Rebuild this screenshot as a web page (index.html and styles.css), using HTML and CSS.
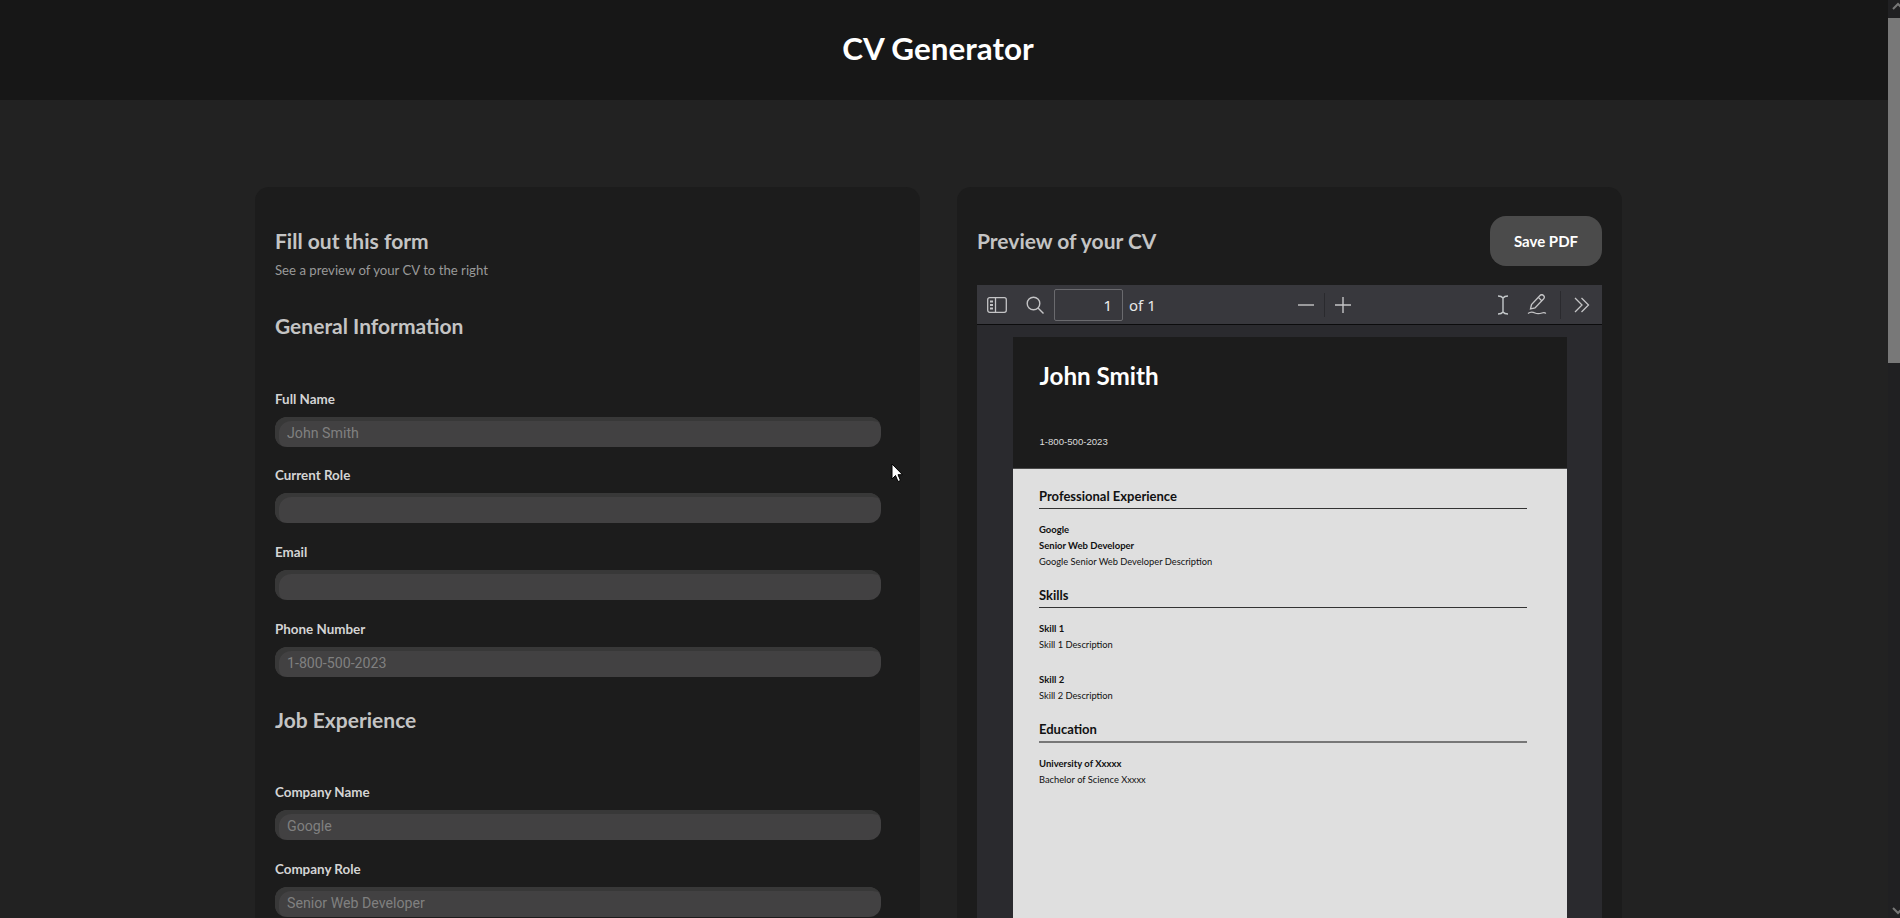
FILE: index.html

```html
<!DOCTYPE html>
<html lang="en">
<head>
  <meta charset="UTF-8" />
  <meta name="viewport" content="width=device-width, initial-scale=1" />
  <title>CV Generator</title>
  <link rel="stylesheet" href="styles.css">
</head>
<body>
  <div class="page">
    <header class="topbar">
      <h1>CV Generator</h1>
    </header>

    <main class="columns">
      <section class="card">
        <h2 class="form-title">Fill out this form</h2>
        <p class="form-sub">See a preview of your CV to the right</p>

        <h2 class="group-title">General Information</h2>
        <div class="field">
          <label for="fullName">Full Name</label>
          <input id="fullName" type="text" placeholder="John Smith" />
        </div>
        <div class="field">
          <label for="currentRole">Current Role</label>
          <input id="currentRole" type="text" />
        </div>
        <div class="field">
          <label for="email">Email</label>
          <input id="email" type="email" />
        </div>
        <div class="field">
          <label for="phone">Phone Number</label>
          <input id="phone" type="text" placeholder="1-800-500-2023" />
        </div>

        <h2 class="group-title">Job Experience</h2>
        <div class="field">
          <label for="company">Company Name</label>
          <input id="company" type="text" placeholder="Google" />
        </div>
        <div class="field">
          <label for="companyRole">Company Role</label>
          <input id="companyRole" type="text" placeholder="Senior Web Developer" />
        </div>
      </section>

      <section class="card">
        <div class="preview-head">
          <h2 class="form-title">Preview of your CV</h2>
          <button class="save-btn" type="button">Save PDF</button>
        </div>

        <div class="viewer">
          <div class="toolbar">
            <div class="tool-left">
              <svg class="icon" width="20" height="16" viewBox="0 0 20 16" fill="none" stroke="#c4c4c6" stroke-width="1.3">
                <rect x="0.7" y="0.7" width="18.6" height="14.6" rx="2"/>
                <path d="M8.5 1v14"/>
                <path d="M3 4.5h3M3 8h3M3 11.500h3" stroke-width="2"/>
              </svg>
              <svg class="icon search-icon" width="18" height="18" viewBox="0 0 18 18" fill="none" stroke="#c4c4c6" stroke-width="1.4">
                <circle cx="7.500" cy="7.500" r="6.300"/>
                <path d="M12 12l5.500 5.500"/>
              </svg>
              <input class="page-num" type="text" value="1" />
              <span class="page-total">of 1</span>
            </div>
            <div class="tool-zoom">
              <svg class="icon" width="16" height="16" viewBox="0 0 16 16" stroke="#c4c4c6" stroke-width="1.4"><path d="M0 8h16"/></svg>
              <span class="tool-sep"></span>
              <svg class="icon" width="16" height="16" viewBox="0 0 16 16" stroke="#c4c4c6" stroke-width="1.4"><path d="M0 8h16M8 0v16"/></svg>
            </div>
            <div class="tool-right">
              <svg class="icon" width="12" height="20" viewBox="0 0 12 20" fill="none" stroke="#c4c8ca" stroke-width="1.4">
                <path d="M1 1c2.500 0 4 .5 5 2 1-1.500 2.500-2 5-2M6 3v14M1 19c2.500 0 4-.5 5-2 1 1.500 2.500 2 5 2"/>
              </svg>
              <svg class="icon pen-icon" width="20" height="21" viewBox="0 0 20 21" fill="none" stroke="#c4c4c6" stroke-width="1.300">
                <path d="M3.500 15l1-4.500L13 1.500c1-1 2.500-1 3.500 0s1 2.500 0 3.500L8 14z"/>
                <path d="M11.500 3.500l3.500 3.500"/>
                <path d="M1 19.500c3-2.500 5-1.500 7-.5s4 1 7 0 3 .5 4 0"/>
              </svg>
              <span class="tool-sep tall"></span>
              <svg class="icon" width="16" height="16" viewBox="0 0 16 16" fill="none" stroke="#c4c4c6" stroke-width="1.300">
                <path d="M1 1l7 7-7 7M7.500 1l7 7-7 7"/>
              </svg>
            </div>
          </div>

          <div class="sheet">
            <div class="cv-head">
              <div class="cv-name">John Smith</div>
              <div class="cv-phone">1-800-500-2023</div>
            </div>
            <div class="cv-body">
              <h3 class="cv-title">Professional Experience</h3>
              <div class="cv-rows">
                <p class="strong">Google</p>
                <p class="strong">Senior Web Developer</p>
                <p>Google Senior Web Developer Description</p>
              </div>

              <h3 class="cv-title">Skills</h3>
              <div class="cv-rows">
                <p class="strong">Skill 1</p>
                <p>Skill 1 Description</p>
              </div>
              <div class="cv-rows second">
                <p class="strong">Skill 2</p>
                <p>Skill 2 Description</p>
              </div>

              <h3 class="cv-title thick">Education</h3>
              <div class="cv-rows">
                <p class="strong">University of Xxxxx</p>
                <p>Bachelor of Science Xxxxx</p>
              </div>
            </div>
          </div>
        </div>
      </section>
    </main>

    <svg class="cursor" width="12" height="20" viewBox="0 0 12 20">
      <path d="M1 1v15l3.500-3.500 2.500 6 2.500-1-2.500-5.800H11.500z" fill="#fff" stroke="#000" stroke-width="1"/>
    </svg>
  </div>

  <div class="scrollbar">
    <div class="scroll-btn"><svg width="12" height="18" viewBox="0 0 12 18" fill="none" stroke="#777" stroke-width="2"><path d="M5 9l5-5 5 5"/></svg></div>
    <div class="scroll-thumb"></div>
    <div class="scroll-btn bottom"><svg width="12" height="18" viewBox="0 0 12 18" fill="none" stroke="#777" stroke-width="2"><path d="M5 8l5 5 5-5"/></svg></div>
  </div>
</body>
</html>
```

FILE: styles.css

```css
html, body {
  height: 100%;
  overflow: hidden;
}
body {
  display: flex;
  margin: 0;
  background: #222;
  font-family: Lato, sans-serif;
}
.page {
  flex: 1;
  position: relative;
  height: 918px;
  overflow: hidden;
}
.topbar {
  height: 100px;
  display: flex;
  align-items: center;
  justify-content: center;
  padding: 0 12px 4px 0;
  box-sizing: border-box;
  background: #171717;
}
.topbar h1 {
  margin: 0;
  font-size: 31.4px;
  font-weight: 700;
  color: #fff;
}
.columns {
  display: grid;
  grid-template-columns: 665px 665px;
  gap: 37px;
  padding: 87px 0 0 255px;
}
.card {
  padding: 20px 20px 40px;
  background: #1c1c1c;
  border-radius: 14px;
}
.form-title {
  margin: 22px 0 0;
  font-size: 21px;
  line-height: 24px;
  font-weight: 700;
  color: #c4c4c4;
}
.form-sub {
  margin: 9px 0 34px;
  font-size: 13.200px;
  line-height: 17px;
  color: #999;
}
.group-title {
  margin: 30px 0 49.500px;
  font-size: 21px;
  line-height: 26px;
  font-weight: 700;
  color: #c4c4c4;
}
.field {
  margin-bottom: 18.800px;
  padding-right: 19px;
}
.field label {
  display: block;
  margin-bottom: 7px;
  font-size: 13.400px;
  line-height: 21px;
  font-weight: 700;
  color: #d4d4d4;
}
.field input {
  display: block;
  width: 100%;
  height: 30px;
  padding: 2px 10px 0 12px;
  box-sizing: border-box;
  border: none;
  border-radius: 12px;
  outline: none;
  background: #424142;
  box-shadow: inset 4px 4px 0 #383838;
  font-family: Roboto, sans-serif;
  font-size: 14.200px;
  color: #ccc;
}
.field input::placeholder {
  color: #808080;
  opacity: 1;
}
.preview-head {
  display: flex;
  align-items: center;
  justify-content: space-between;
  height: 58px;
  margin-top: 5px;
  margin-bottom: 15px;
}
.preview-head .form-title {
  margin: 0;
}
.save-btn {
  width: 112px;
  height: 50px;
  border: none;
  border-radius: 16px;
  background: #4b4b4b;
  color: #fff;
  font-family: Lato, sans-serif;
  font-size: 15px;
  font-weight: 700;
}
.viewer {
  height: 700px;
  background: #2a2a2e;
}
.toolbar {
  display: flex;
  align-items: center;
  height: 40px;
  padding: 0 12px 0 10px;
  box-sizing: border-box;
  background: #38383d;
  border-bottom: 1px solid #0c0c0d;
}
.icon {
  display: block;
  flex: none;
}
.tool-left {
  display: flex;
  align-items: center;
  width: 311px;
}
.search-icon {
  margin-left: 19px;
}
.page-num {
  width: 69px;
  height: 32px;
  margin-left: 10px;
  padding: 0 10px;
  box-sizing: border-box;
  border: 1px solid #6a6a6e;
  border-radius: 2px;
  background: #38383d;
  color: #f0f0f0;
  font-family: "Noto Sans", sans-serif;
  font-size: 15px;
  text-align: right;
}
.page-total {
  margin-left: 6px;
  font-family: "Noto Sans", sans-serif;
  font-size: 15px;
  color: #e8e8e8;
}
.tool-zoom {
  display: flex;
  align-items: center;
}
.tool-sep {
  width: 1px;
  height: 24px;
  margin: 0 10px;
  background: #2a2a2e;
}
.tool-sep.tall {
  height: 28px;
  margin: 0 13px;
}
.tool-right {
  display: flex;
  align-items: center;
  margin-left: auto;
}
.pen-icon {
  margin-left: 18px;
}
.sheet {
  width: 554px;
  margin: 12px 0 0 36px;
}
.cv-head {
  height: 132px;
  padding: 24px 26.500px 0;
  box-sizing: border-box;
  background: #1c1c1c;
  border-bottom: 1px solid #4a4a4a;
}
.cv-name {
  font-size: 24.200px;
  line-height: 29px;
  font-weight: 700;
  color: #fff;
}
.cv-phone {
  margin-top: 46px;
  font-family: "Liberation Sans", sans-serif;
  font-size: 9.600px;
  line-height: 12px;
  color: #ddd;
}
.cv-body {
  height: 450px;
  padding: 18.500px 40px 0 26px;
  box-sizing: border-box;
  background: #dfdfdf;
  border-bottom: 1px solid #aaa;
}
.cv-title {
  margin: 0 0 13px;
  padding-bottom: 4px;
  border-bottom: 1px solid #333;
  font-size: 13px;
  line-height: 16px;
  font-weight: 700;
  color: #111;
}
.cv-title.thick {
  border-bottom: 2px solid #777;
}
.cv-rows {
  margin-bottom: 17px;
}
.cv-rows.second {
  margin-top: 19px;
  margin-bottom: 17px;
}
.cv-rows p {
  margin: 0;
  font-size: 9.300px;
  line-height: 16px;
  color: #111;
}
.cv-rows .strong {
  font-size: 9.500px;
  font-weight: 700;
}
.cursor {
  position: absolute;
  left: 891px;
  top: 463px;
}
.scrollbar {
  flex: none;
  display: flex;
  flex-direction: column;
  width: 12px;
  height: 918px;
  background: #202022;
}
.scroll-btn {
  height: 18px;
  overflow: hidden;
}
.scroll-btn.bottom {
  margin-top: auto;
}
.scroll-btn svg {
  display: block;
}
.scroll-thumb {
  height: 345px;
  background: #787878;
}
```
